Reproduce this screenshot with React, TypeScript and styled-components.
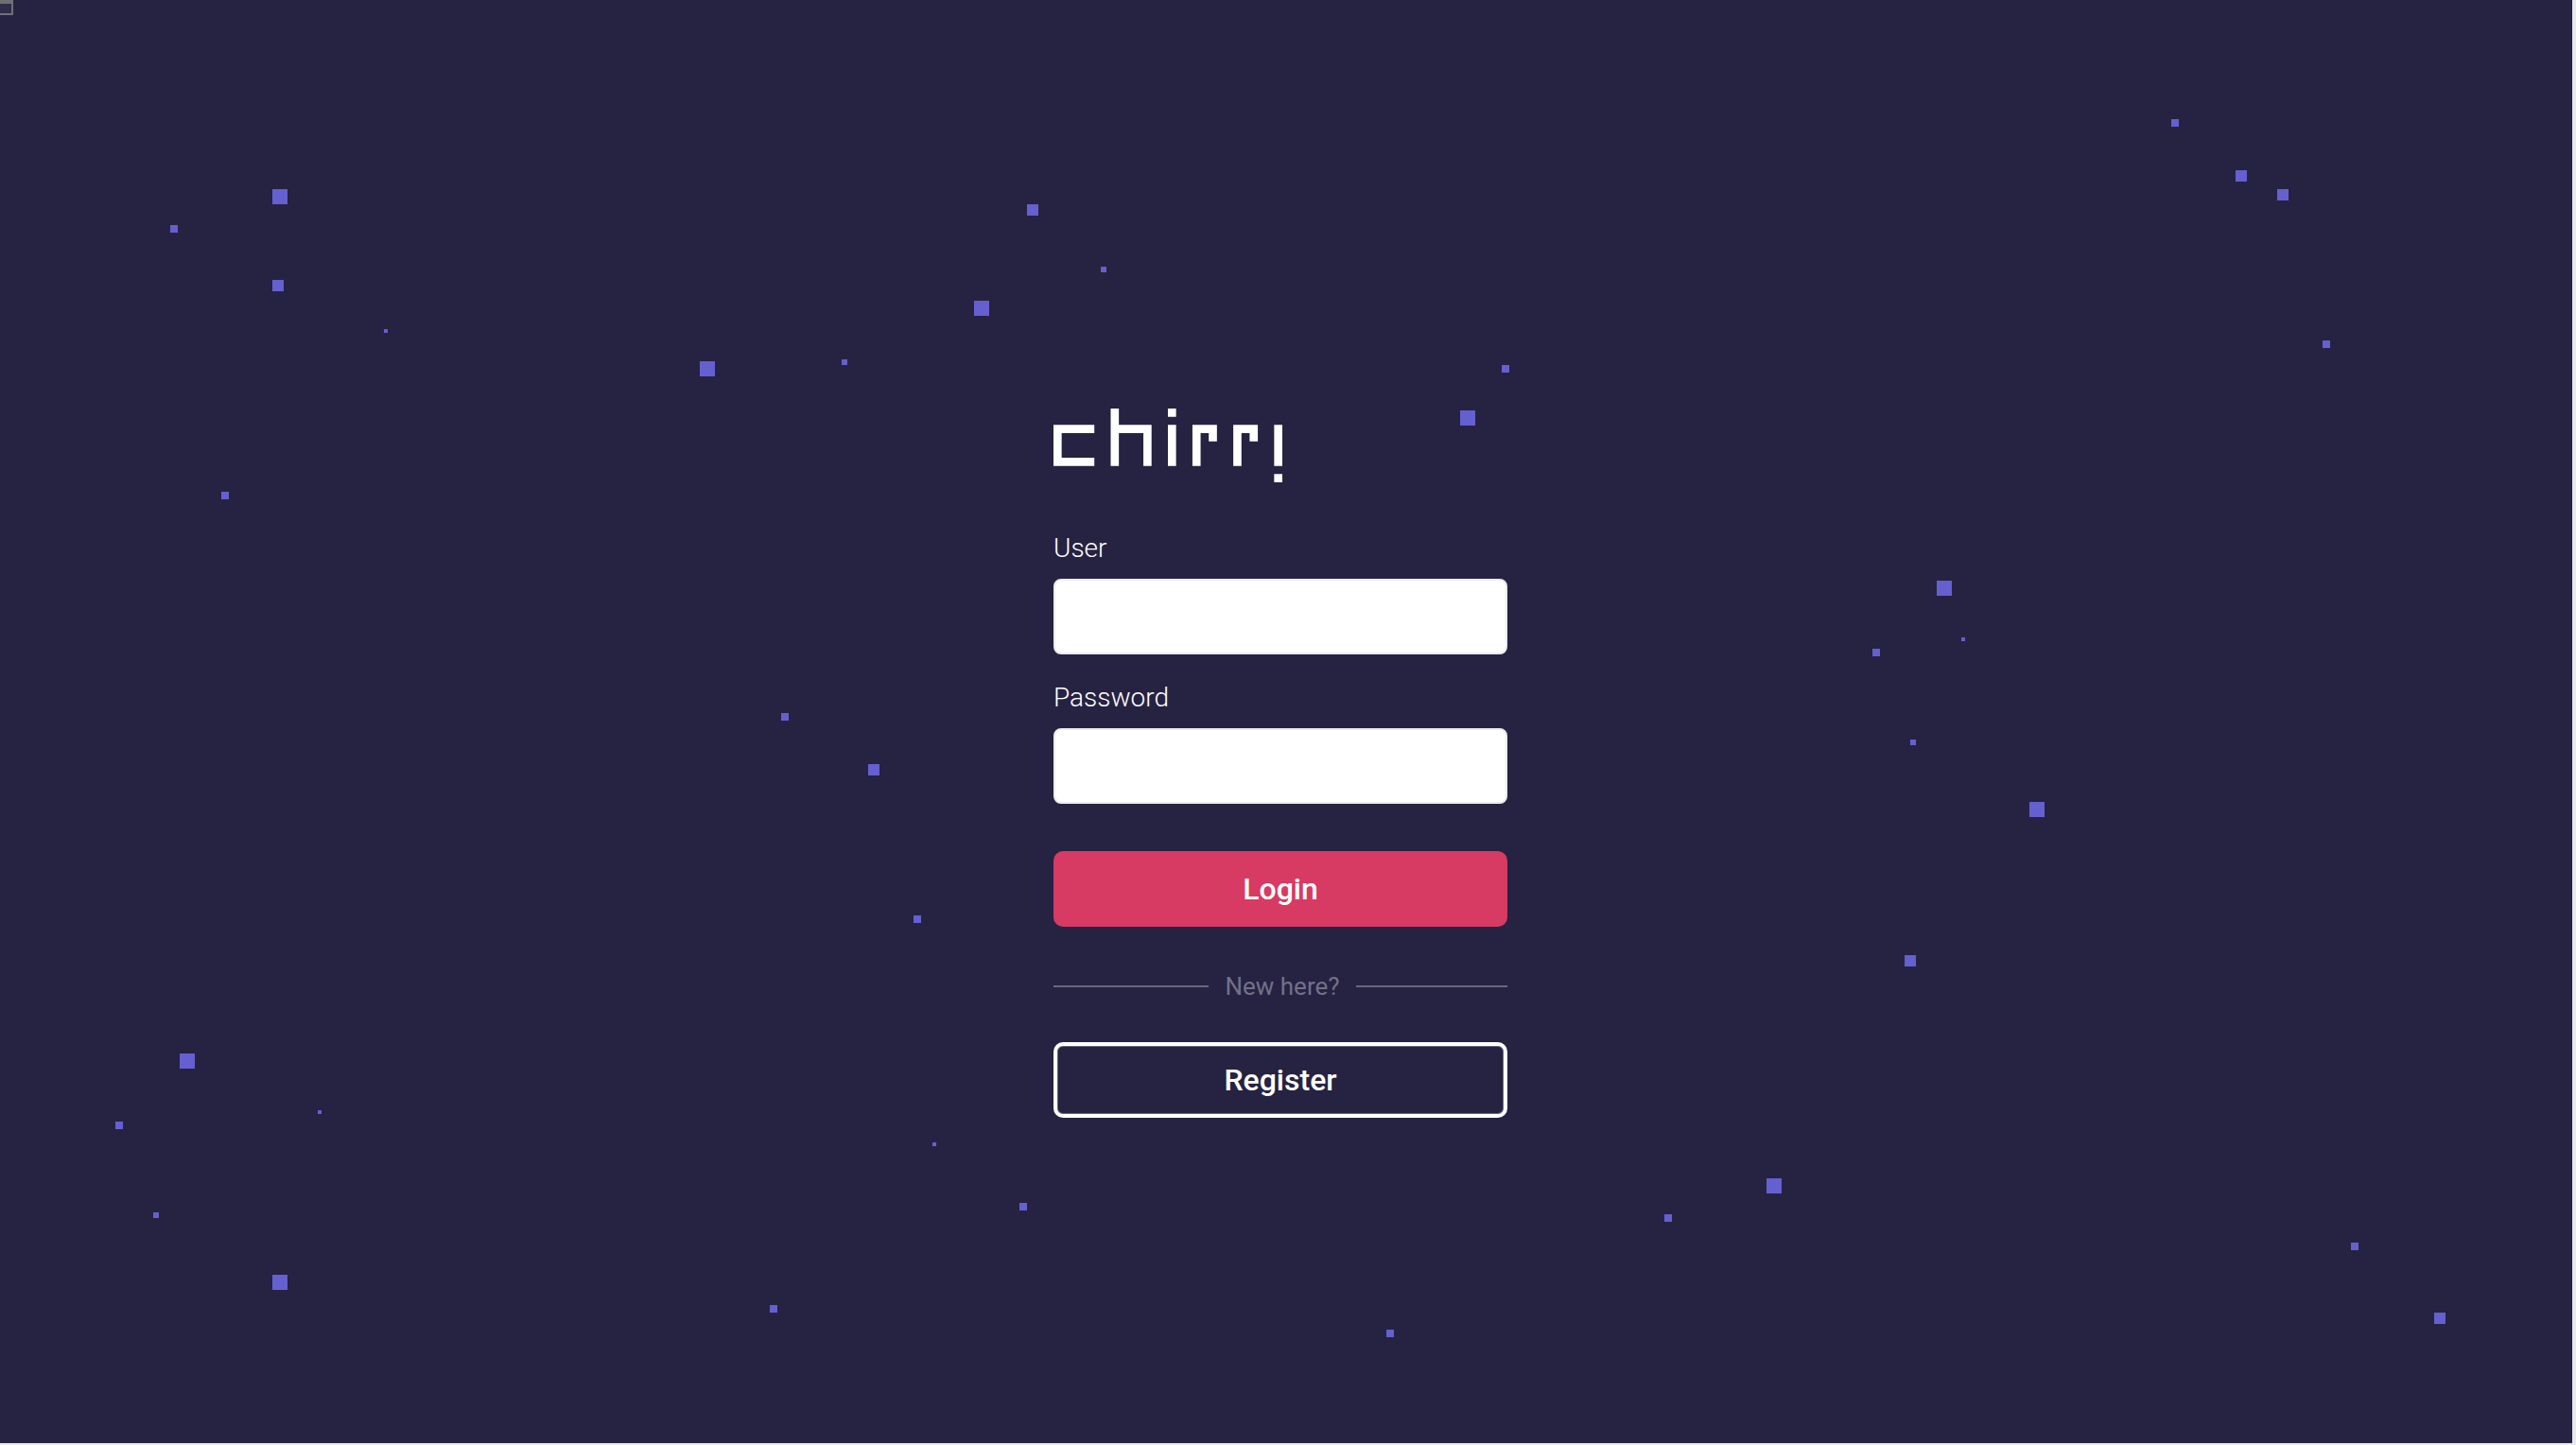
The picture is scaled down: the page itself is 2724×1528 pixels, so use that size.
import React from "react";
import styled, { createGlobalStyle } from "styled-components";

const colors = {
  night: "#262242",
  star: "#6560cf",
  accent: "#d73a62",
  muted: "#737088",
  rule: "#6a677b",
  gutter: "#e9e9eb",
};

const GlobalStyle = createGlobalStyle`
  *, *::before, *::after { box-sizing: border-box; }
  body {
    margin: 0;
    background: ${colors.gutter};
    font-family: Roboto, "Liberation Sans", sans-serif;
  }
`;

const Page = styled.div`
  min-height: 100vh;
  padding: 0 4px 2px 0;
  display: flex;
`;

const Sky = styled.main`
  position: relative;
  flex: 1;
  display: flex;
  justify-content: center;
  overflow: hidden;
  padding: 432px 12px 48px 0;
  background: ${colors.night};
`;

const Star = styled.span<{ $size: number }>`
  position: absolute;
  width: ${(p) => p.$size}px;
  height: ${(p) => p.$size}px;
  background: ${colors.star};
`;

const CornerMark = styled.span`
  position: absolute;
  top: 0;
  left: 0;
  width: 14px;
  height: 16px;
  border: 2px solid #6f6f74;
  border-top-width: 4px;
  border-left: 0;
  background: #302c4c;
`;

const Panel = styled.div`
  position: relative;
  width: 480px;
  max-width: 100%;
  display: flex;
  flex-direction: column;
`;

const LogoMark = styled.svg`
  width: 242px;
  height: 78px;
  margin-bottom: 52px;
  fill: #fff;
`;

const Form = styled.form`
  display: flex;
  flex-direction: column;
  gap: 28px;
`;

const Field = styled.div`
  display: flex;
  flex-direction: column;
  gap: 14px;
`;

const Label = styled.label`
  font-size: 28px;
  font-weight: 300;
  line-height: 36px;
  color: #fff;
`;

const TextInput = styled.input`
  width: 100%;
  height: 80px;
  padding: 0 20px;
  border: 2px solid #ececec;
  border-radius: 8px;
  background: #fff;
  color: ${colors.night};
  font: 300 28px Roboto, "Liberation Sans", sans-serif;
`;

const Button = styled.button<{ $outlined?: boolean }>`
  width: 100%;
  height: 80px;
  padding: 0;
  border: ${(p) => (p.$outlined ? "4px solid #fff" : "0")};
  border-radius: 10px;
  background: ${(p) => (p.$outlined ? "transparent" : colors.accent)};
  box-shadow: ${(p) => (p.$outlined ? "inset 0 0 0 1px rgba(255, 255, 255, 0.3)" : "none")};
  color: #fff;
  font: 500 32px/40px Roboto, "Liberation Sans", sans-serif;
  cursor: pointer;
`;

const Actions = styled.div`
  padding-top: 22px;
`;

const Divider = styled.div`
  display: flex;
  align-items: center;
  gap: 17px;
  margin: 46px 0 42px;
  color: ${colors.muted};
  font-size: 26px;
  line-height: 34px;

  &::before,
  &::after {
    content: "";
    flex: 40;
    height: 2px;
    background: ${colors.rule};
  }

  &::before {
    flex: 41;
  }
`;

// x, y, size
const stars: [number, number, number][] = [
  [288, 200, 16], [180, 238, 8], [288, 296, 12], [406, 348, 4], [740, 382, 16],
  [234, 520, 8], [1086, 216, 12], [1164, 282, 6], [1030, 318, 16], [890, 380, 6],
  [1588, 386, 8], [1544, 434, 16], [2296, 126, 8], [2364, 180, 12], [2408, 200, 12],
  [2456, 360, 8], [2048, 614, 16], [2074, 674, 4], [1980, 686, 8], [2020, 782, 6],
  [2146, 848, 16], [2014, 1010, 12], [190, 1114, 16], [336, 1174, 4], [122, 1186, 8],
  [162, 1282, 6], [288, 1348, 16], [826, 754, 8], [918, 808, 12], [966, 968, 8],
  [986, 1208, 4], [1078, 1272, 8], [814, 1380, 8], [1868, 1246, 16], [1760, 1284, 8],
  [2486, 1314, 8], [2574, 1388, 12], [1466, 1406, 8],
];

const Logo = () => (
  <LogoMark viewBox="0 0 28 9" preserveAspectRatio="none" role="img" aria-label="chirri">
    <path d="M0 2h5v1H1v3h4v1H0z" />
    <path d="M7 0h1v2h4v5h-1V3H8v4H7z" />
    <path d="M14 0h1v1h-1zM14 2h1v5h-1z" />
    <path d="M17 2h3v2h-1V3h-1v4h-1z" />
    <path d="M22 2h3v2h-1V3h-1v4h-1z" />
    <path d="M27 2h1v5h-1zM27 8h1v1h-1z" />
  </LogoMark>
);

export default function App() {
  return (
    <>
      <GlobalStyle />
      <Page>
        <Sky>
          {stars.map(([left, top, size]) => (
            <Star key={`${left}-${top}`} $size={size} style={{ left, top }} />
          ))}
          <CornerMark />
          <Panel>
            <Logo />
            <Form onSubmit={(e) => e.preventDefault()}>
              <Field>
                <Label htmlFor="user">User</Label>
                <TextInput id="user" type="text" />
              </Field>
              <Field>
                <Label htmlFor="password">Password</Label>
                <TextInput id="password" type="password" />
              </Field>
              <Actions>
                <Button type="submit">Login</Button>
              </Actions>
            </Form>
            <Divider>New here?</Divider>
            <Button type="button" $outlined>
              Register
            </Button>
          </Panel>
        </Sky>
      </Page>
    </>
  );
}
